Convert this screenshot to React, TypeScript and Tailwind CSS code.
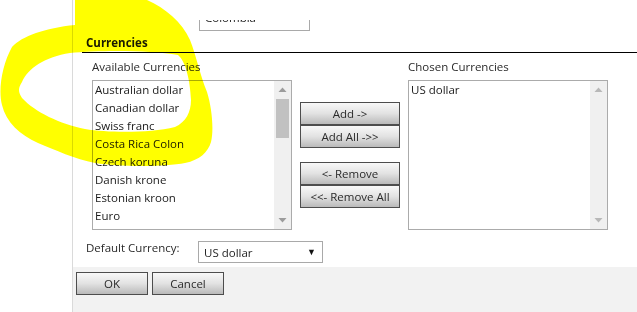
import React from "react";

const available = [
  "Australian dollar",
  "Canadian dollar",
  "Swiss franc",
  "Costa Rica Colon",
  "Czech koruna",
  "Danish krone",
  "Estonian kroon",
  "Euro",
];

function Arrow({ up, color }: { up?: boolean; color: string }) {
  return (
    <svg width="9" height="5" viewBox="0 0 9 5">
      {up ? (
        <polygon points="0.5,5 4.5,0.5 8.5,5" fill={color} />
      ) : (
        <polygon points="0.5,0 4.5,4.5 8.5,0" fill={color} />
      )}
    </svg>
  );
}

function ListBox({ items, thumb }: { items: string[]; thumb: boolean }) {
  const arrowColor = thumb ? "#9c9c9c" : "#b8b8b8";
  return (
    <div className="flex w-[200px] h-[150px] border border-[#ababab] bg-white">
      <div className="flex-1 pl-[2px] overflow-hidden">
        {items.map((t) => (
          <div key={t} className="h-[18px] leading-[18px] text-[11.5px] text-[#1a1a1a] whitespace-nowrap">
            {t}
          </div>
        ))}
      </div>
      <div className="w-[17px] bg-[#f0f0f0] flex flex-col">
        <div className="h-[17px] flex items-center justify-center">
          <Arrow up color={arrowColor} />
        </div>
        {thumb && <div className="mt-[1px] mx-[2px] h-[39px] bg-[#c1c1c1]" />}
        <div className="flex-1" />
        <div className="h-[17px] flex items-center justify-center">
          <Arrow color={arrowColor} />
        </div>
      </div>
    </div>
  );
}

function Btn({ children, w }: { children: React.ReactNode; w: string }) {
  return (
    <div
      className={`${w} h-[23px] border border-[#4d4d4d] bg-linear-to-b from-[#f8f8f8] via-[#e2e2e2] to-[#bababa] flex items-center justify-center text-[11.5px] text-[#2a2a2a] leading-none`}
    >
      {children}
    </div>
  );
}

export default function App() {
  return (
    <div className="relative w-[637px] h-[312px] overflow-hidden bg-white flex font-['Open_Sans',sans-serif] text-[#222]">
      <div className="w-[72px] shrink-0" />
      <div className="flex-1 border-l border-[#dadada] flex flex-col">
        <div className="h-[267px] bg-white flex flex-col">
          <div className="h-[20px]" />
          <div className="ml-[126px] w-[111px] h-[11px] border-x border-b border-[#a9a9a9] overflow-hidden">
            <div className="-mt-[10px] pl-[5px] text-[11.5px] leading-[16px] text-[#222]">Colombia</div>
          </div>
          <div className="mt-[4px] ml-[9px] pl-[4px] h-[18px] border-b border-black text-[11.5px] font-bold leading-[16px] text-[#1a1a1a]">
            Currencies
          </div>
          <div className="mt-[6px] pl-[19px] flex items-start">
            <div className="flex flex-col">
              <div className="h-[16px] leading-[16px] text-[11.5px] text-[#2a2a2a]">Available Currencies</div>
              <div className="mt-[5px]">
                <ListBox items={available} thumb />
              </div>
            </div>
            <div className="ml-[8px] flex flex-col pt-[43px]">
              <Btn w="w-[100px]">Add -&gt;</Btn>
              <Btn w="w-[100px]">Add All -&gt;&gt;</Btn>
              <div className="h-[14px]" />
              <Btn w="w-[100px]">&lt;- Remove</Btn>
              <Btn w="w-[100px]">&lt;&lt;- Remove All</Btn>
            </div>
            <div className="ml-[8px] flex flex-col">
              <div className="h-[16px] leading-[16px] text-[11.5px] text-[#2a2a2a]">Chosen Currencies</div>
              <div className="mt-[5px]">
                <ListBox items={["US dollar"]} thumb={false} />
              </div>
            </div>
          </div>
          <div className="mt-[11px] flex items-start">
            <div className="w-[125px] pl-[13px] h-[16px] leading-[16px] -mt-[1px] text-[11.5px] text-[#2a2a2a]">Default Currency:</div>
            <div className="w-[125px] h-[22px] border border-[#a9a9a9] bg-white flex items-center pl-[5px] pr-[6px]">
              <span className="flex-1 text-[11.5px] text-[#1e1e1e] pt-[1px]">US dollar</span>
              <span className="text-[9px] text-[#111]">▼</span>
            </div>
          </div>
        </div>
        <div className="flex-1 bg-[#f2f2f2] flex items-start pt-[5px] pl-[3px] gap-[4px]">
          <Btn w="w-[72px]">OK</Btn>
          <Btn w="w-[72px]">Cancel</Btn>
        </div>
      </div>
      <svg
        className="absolute inset-0 pointer-events-none mix-blend-multiply"
        width="637"
        height="312"
        viewBox="0 0 637 312"
      >
        <path
          fillRule="evenodd"
          fill="#ffff00"
          d="M75,0 L147,0 C165,8 182,22 190,40 C196,55 200,75 207,92 C212,108 214,130 211,142 C208,152 200,160 185,163 C165,167 120,167 95,163 C75,159 55,150 38,143 C20,135 6,122 2,105 C-2,90 2,65 12,47 C22,36 45,28 75,25 Z M22,82 C28,68 45,57 70,53 C100,50 150,50 178,55 C186,62 190,80 191,100 C191,112 186,122 175,127 C150,133 110,133 85,129 C60,124 35,112 22,98 C18,92 18,88 22,82 Z"
        />
      </svg>
    </div>
  );
}
